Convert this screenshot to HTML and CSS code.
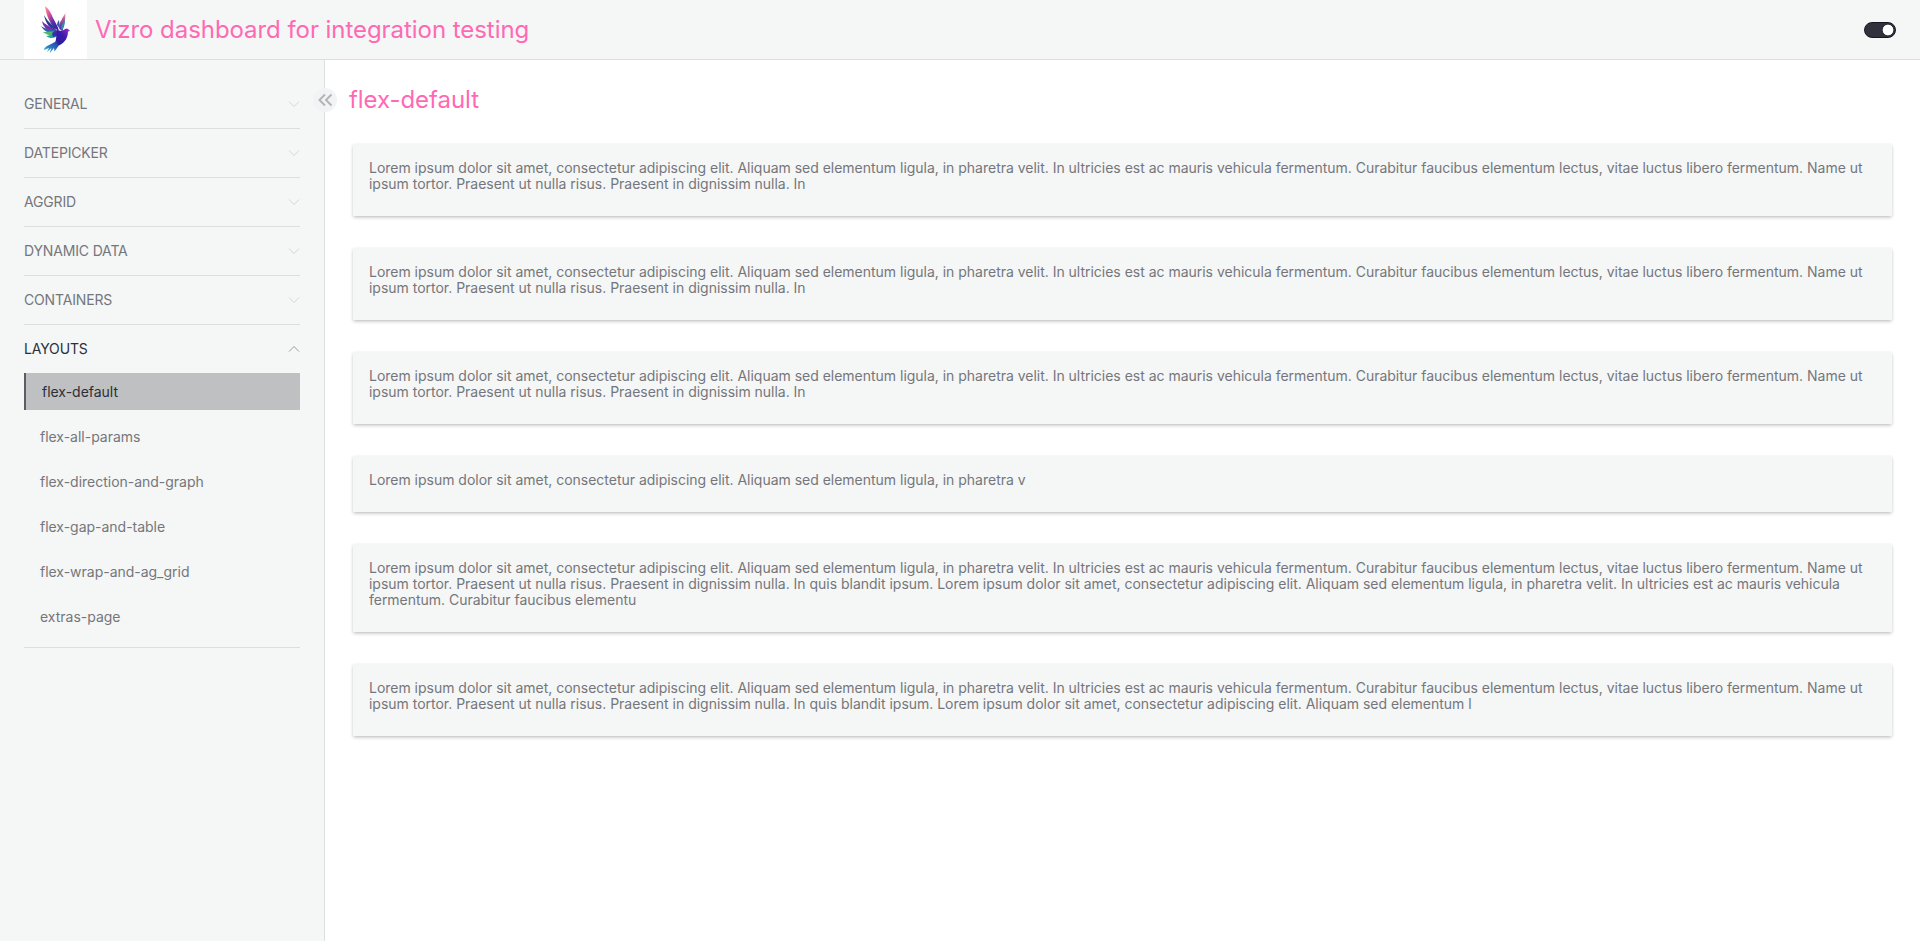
FILE: index.html
```
<!DOCTYPE html>
<html lang="en">
<head>
<meta charset="utf-8">
<title>Vizro dashboard for integration testing</title>
<link rel="stylesheet" href="styles.css">
</head>
<body>
<header class="header">
  <div class="logo">
    <svg width="63" height="59" viewBox="0 0 63 59">
      <defs>
        <linearGradient id="wing" x1="0" y1="0" x2="1" y2="1"><stop offset="0" stop-color="#ffa58c"/><stop offset=".3" stop-color="#e0509c"/><stop offset=".6" stop-color="#5a30a8"/><stop offset="1" stop-color="#241a9c"/></linearGradient>
        <linearGradient id="back" x1="0" y1="0" x2="0" y2="1"><stop offset="0" stop-color="#ffc49a"/><stop offset=".35" stop-color="#b95a98"/><stop offset="1" stop-color="#3326a4"/></linearGradient>
        <linearGradient id="body" x1="1" y1="0" x2="0" y2="1"><stop offset="0" stop-color="#a32bd0"/><stop offset=".4" stop-color="#3a19aa"/><stop offset="1" stop-color="#1c2299"/></linearGradient>
        <linearGradient id="tail" x1="1" y1="0" x2="0" y2="1"><stop offset="0" stop-color="#2430a8"/><stop offset="1" stop-color="#35bfd8"/></linearGradient>
      </defs>
      <path fill="url(#wing)" d="M21 6c4 3 6 7 8 12 2 4 5 8 6 13l-5-3c-4-5-8-13-9-22z"/>
      <path fill="#243a8f" d="M20 15c2 4 5 7 8 10l5 6-6-3c-4-3-6-8-7-13z"/>
      <path fill="#7a2aaf" d="M18 21c3 4 8 5 15 10l-5 1c-5-2-9-5-10-11z"/>
      <path fill="#2b62a8" d="M17 26c4 3 9 3 16 5l-4 2c-5 0-9-2-12-7z"/>
      <path fill="#51b86a" d="M19 32c5 0 8-1 12 0l-2 3c-4 1-7-1-10-3z"/>
      <path fill="#24a7a0" d="M22 36c4 0 7-3 11-3l-1 4c-4 2-7 1-10-1z"/>
      <path fill="#3a2bb0" d="M28 33c3-2 5-3 6-3l-1 6-4 1z"/>
      <path fill="url(#back)" d="M41.500 12c0 6-1 12-3 19l-3-2c-1-4 0-6 2-9 1-3 3-5 4.500-8z"/>
      <path fill="#3f53b5" d="M35 20l1 9-3-4c0-2 1-4 2-5z"/>
      <path fill="#2a8fa8" d="M41 20c0 4-1 7-3 10l-1-1c0-4 2-6 4-9z"/>
      <path fill="url(#body)" d="M33 30c3 1 6 1 8-1l2-.5c1 .5 2 1.500 3 2.500l-2 .5c0 6-3 11-9 14l-7 1.500c2-3 4-5 4-8z"/>
      <path fill="url(#tail)" d="M33 41l-10 5c-2 1-3 3-3 4l5-2-2 4 4.500-4-2 5.500 4.500-5.500.5 3.500 4-5.500z"/>
    </svg>
  </div>
  <h1 class="dashboard-title">Vizro dashboard for integration testing</h1>
  <div class="switch"></div>
</header>
<div class="shell">
  <nav class="sidebar">
    <div class="section"><span>GENERAL</span><svg class="chevron" viewBox="0 0 12 12"><path d="M1 3.5l5 5 5-5"/></svg></div>
    <div class="section"><span>DATEPICKER</span><svg class="chevron" viewBox="0 0 12 12"><path d="M1 3.5l5 5 5-5"/></svg></div>
    <div class="section"><span>AGGRID</span><svg class="chevron" viewBox="0 0 12 12"><path d="M1 3.5l5 5 5-5"/></svg></div>
    <div class="section"><span>DYNAMIC DATA</span><svg class="chevron" viewBox="0 0 12 12"><path d="M1 3.5l5 5 5-5"/></svg></div>
    <div class="section"><span>CONTAINERS</span><svg class="chevron" viewBox="0 0 12 12"><path d="M1 3.5l5 5 5-5"/></svg></div>
    <div class="section open"><span>LAYOUTS</span><svg class="chevron" viewBox="0 0 12 12"><path d="M1 8.5l5-5 5 5"/></svg></div>
    <div class="links">
      <a class="link active">flex-default</a>
      <a class="link">flex-all-params</a>
      <a class="link">flex-direction-and-graph</a>
      <a class="link">flex-gap-and-table</a>
      <a class="link">flex-wrap-and-ag_grid</a>
      <a class="link">extras-page</a>
    </div>
    <div class="collapse"><svg width="24" height="24" viewBox="0 0 24 24"><path d="M12 6.500L6.500 12l5.500 5.500M18.500 6.500L13 12l5.500 5.500"/></svg></div>
  </nav>
  <main class="main">
    <h2 class="page-title">flex-default</h2>
    <div class="cards">
      <p class="card">Lorem ipsum dolor sit amet, consectetur adipiscing elit. Aliquam sed elementum ligula, in pharetra velit. In ultricies est ac mauris vehicula fermentum. Curabitur faucibus elementum lectus, vitae luctus libero fermentum. Name ut ipsum tortor. Praesent ut nulla risus. Praesent in dignissim nulla. In</p>
      <p class="card">Lorem ipsum dolor sit amet, consectetur adipiscing elit. Aliquam sed elementum ligula, in pharetra velit. In ultricies est ac mauris vehicula fermentum. Curabitur faucibus elementum lectus, vitae luctus libero fermentum. Name ut ipsum tortor. Praesent ut nulla risus. Praesent in dignissim nulla. In</p>
      <p class="card">Lorem ipsum dolor sit amet, consectetur adipiscing elit. Aliquam sed elementum ligula, in pharetra velit. In ultricies est ac mauris vehicula fermentum. Curabitur faucibus elementum lectus, vitae luctus libero fermentum. Name ut ipsum tortor. Praesent ut nulla risus. Praesent in dignissim nulla. In</p>
      <p class="card">Lorem ipsum dolor sit amet, consectetur adipiscing elit. Aliquam sed elementum ligula, in pharetra v</p>
      <p class="card">Lorem ipsum dolor sit amet, consectetur adipiscing elit. Aliquam sed elementum ligula, in pharetra velit. In ultricies est ac mauris vehicula fermentum. Curabitur faucibus elementum lectus, vitae luctus libero fermentum. Name ut ipsum tortor. Praesent ut nulla risus. Praesent in dignissim nulla. In quis blandit ipsum. Lorem ipsum dolor sit amet, consectetur adipiscing elit. Aliquam sed elementum ligula, in pharetra velit. In ultricies est ac mauris vehicula fermentum. Curabitur faucibus elementu</p>
      <p class="card">Lorem ipsum dolor sit amet, consectetur adipiscing elit. Aliquam sed elementum ligula, in pharetra velit. In ultricies est ac mauris vehicula fermentum. Curabitur faucibus elementum lectus, vitae luctus libero fermentum. Name ut ipsum tortor. Praesent ut nulla risus. Praesent in dignissim nulla. In quis blandit ipsum. Lorem ipsum dolor sit amet, consectetur adipiscing elit. Aliquam sed elementum l</p>
    </div>
  </main>
</div>
</body>
</html>
```
FILE: styles.css
```
* { box-sizing: border-box; }
body {
  margin: 0;
  height: 100vh;
  display: flex;
  flex-direction: column;
  overflow: hidden;
  background: #fff;
  color: #74767c;
  font: 14px/16px Inter, sans-serif;
  letter-spacing: -0.016px;
}
.header {
  display: flex;
  align-items: center;
  height: 60px;
  padding: 0 24px;
  background: #f5f6f6;
  border-bottom: 1px solid #dcdedf;
}
.logo { width: 63px; height: 59px; background: #fff; }
.logo svg { display: block; }
.dashboard-title, .page-title {
  margin: 0;
  color: #ff69b4;
  font-size: 24px;
  font-weight: 400;
  line-height: 32px;
  letter-spacing: -0.055px;
}
.dashboard-title { margin-left: 8px; flex: 1; }
.switch {
  width: 32px;
  height: 16px;
  border: 1px solid #141721;
  border-radius: 8px;
  background: radial-gradient(circle at 23px 7px, #fff 5px, #2f323d 5.700px);
}
.shell { display: flex; flex: 1; min-height: 0; }
.sidebar {
  position: relative;
  flex: none;
  width: 325px;
  padding: 20px 24px 0;
  background: #f5f6f6;
  border-right: 1px solid #dcdedf;
}
.section {
  display: flex;
  align-items: center;
  justify-content: space-between;
  height: 49px;
  border-bottom: 1px solid #dcdedf;
  letter-spacing: -0.16px;
}
.chevron { width: 12px; height: 12px; fill: none; stroke: #d5d7d8; stroke-width: 1; }
.open { height: 48px; border-bottom: 0; color: #2c2f39; }
.open .chevron { stroke: #9a9ca1; }
.links {
  display: flex;
  flex-direction: column;
  gap: 8px;
  padding-bottom: 12px;
  border-bottom: 1px solid #dcdedf;
}
.link { height: 37px; padding: 11px 16px 10px; }
.active { background: #bfc0c2; border-left: 2px solid #5a5d66; color: #2c2f39; }
.collapse {
  position: absolute;
  top: 28px;
  right: -13px;
  width: 24px;
  height: 24px;
  border-radius: 50%;
  background: #f2f3f5;
}
.collapse svg { display: block; fill: none; stroke: #b2b4b8; stroke-width: 2; }
.main { flex: 1; padding: 24px 28px 0 24px; }
.page-title { margin-bottom: 28px; }
.cards { display: flex; flex-direction: column; gap: 32px; margin-left: 4px; }
.card {
  margin: 0;
  padding: 16px 16px 24px;
  background: #f5f6f6;
  box-shadow: 0 2px 4px -1px rgba(20, 23, 33, .22), 0 1px 3px 0 rgba(20, 23, 33, .12);
}
```
